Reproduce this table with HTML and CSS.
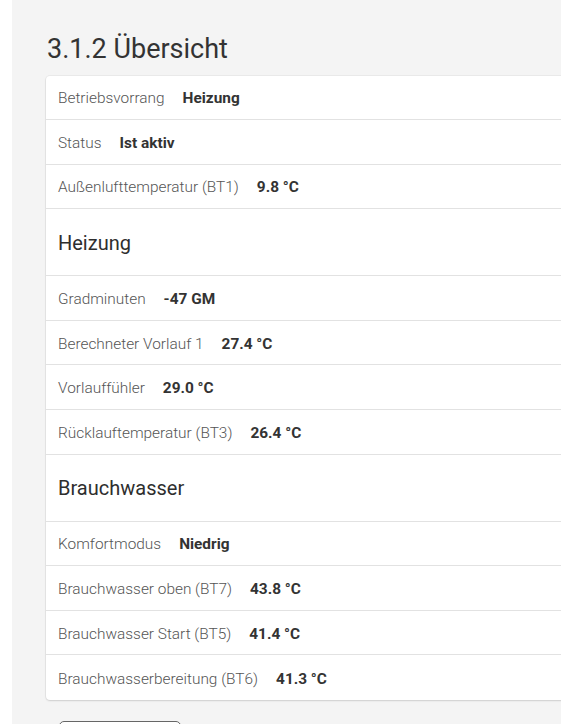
FILE: index.html
```html
<!DOCTYPE html>
<html lang="de">
<head>
<meta charset="utf-8">
<title>3.1.2 Übersicht</title>
<link rel="stylesheet" href="styles.css">
</head>
<body>
<div class="page">
  <main class="main">
    <h1 class="title">3.1.2 Übersicht</h1>
    <section class="card">
      <div class="row"><span class="label">Betriebsvorrang</span><span class="value">Heizung</span></div>
      <div class="row"><span class="label">Status</span><span class="value">Ist aktiv</span></div>
      <div class="row"><span class="label">Außenlufttemperatur (BT1)</span><span class="value">9.8 °C</span></div>
      <div class="section"><h2 class="section-title">Heizung</h2></div>
      <div class="row"><span class="label">Gradminuten</span><span class="value">-47 GM</span></div>
      <div class="row"><span class="label">Berechneter Vorlauf 1</span><span class="value">27.4 °C</span></div>
      <div class="row"><span class="label">Vorlauffühler</span><span class="value">29.0 °C</span></div>
      <div class="row"><span class="label">Rücklauftemperatur (BT3)</span><span class="value">26.4 °C</span></div>
      <div class="section"><h2 class="section-title">Brauchwasser</h2></div>
      <div class="row"><span class="label">Komfortmodus</span><span class="value">Niedrig</span></div>
      <div class="row"><span class="label">Brauchwasser oben (BT7)</span><span class="value">43.8 °C</span></div>
      <div class="row"><span class="label">Brauchwasser Start (BT5)</span><span class="value">41.4 °C</span></div>
      <div class="row row-last"><span class="label">Brauchwasserbereitung (BT6)</span><span class="value">41.3 °C</span></div>
    </section>
    <div class="actions"><button class="btn" type="button" aria-label="Zurück"></button></div>
  </main>
</div>
</body>
</html>
```
FILE: styles.css
```css
html, body {
  margin: 0;
  padding: 0;
  background: #ffffff;
  overflow: hidden;
}
body {
  font-family: Roboto, "Liberation Sans", sans-serif;
  color: #333;
}
.page {
  padding-left: 12px;
  width: 640px;
}
.main {
  background: #f4f4f4;
  padding: 0 0 40px 34px;
  min-height: 724px;
}
.title {
  margin: 0;
  padding-top: 34px;
  height: 41.5px;
  font-size: 27px;
  font-weight: 400;
  line-height: 30px;
  color: #333;
  box-sizing: content-box;
  padding-left: 1px;
}
.card {
  background: #fff;
  border-radius: 4px;
  box-shadow: 0 1px 2px rgba(0,0,0,0.12), 0 0 0 1px rgba(0,0,0,0.04);
}
.row {
  display: flex;
  align-items: center;
  gap: 18px;
  height: 41.6px;
  padding: 2px 12px 0;
  border-bottom: 1px solid #e2e2e2;
  font-size: 15.4px;
}
.row-last { border-bottom: none; height: 42.6px; }
.label {
  font-weight: 300;
  color: #555;
}
.value {
  font-weight: 700;
  color: #333;
}
.section {
  display: flex;
  align-items: center;
  height: 65px;
  padding: 1px 12px 0;
  border-bottom: 1px solid #e2e2e2;
}
.section-title {
  margin: 0;
  font-size: 20px;
  font-weight: 400;
  color: #2e2e2e;
}
.actions {
  padding: 21px 0 0 13px;
}
.btn {
  display: block;
  width: 122px;
  height: 36px;
  border: 1px solid #666;
  border-radius: 5px;
  background: #fff;
}
```
